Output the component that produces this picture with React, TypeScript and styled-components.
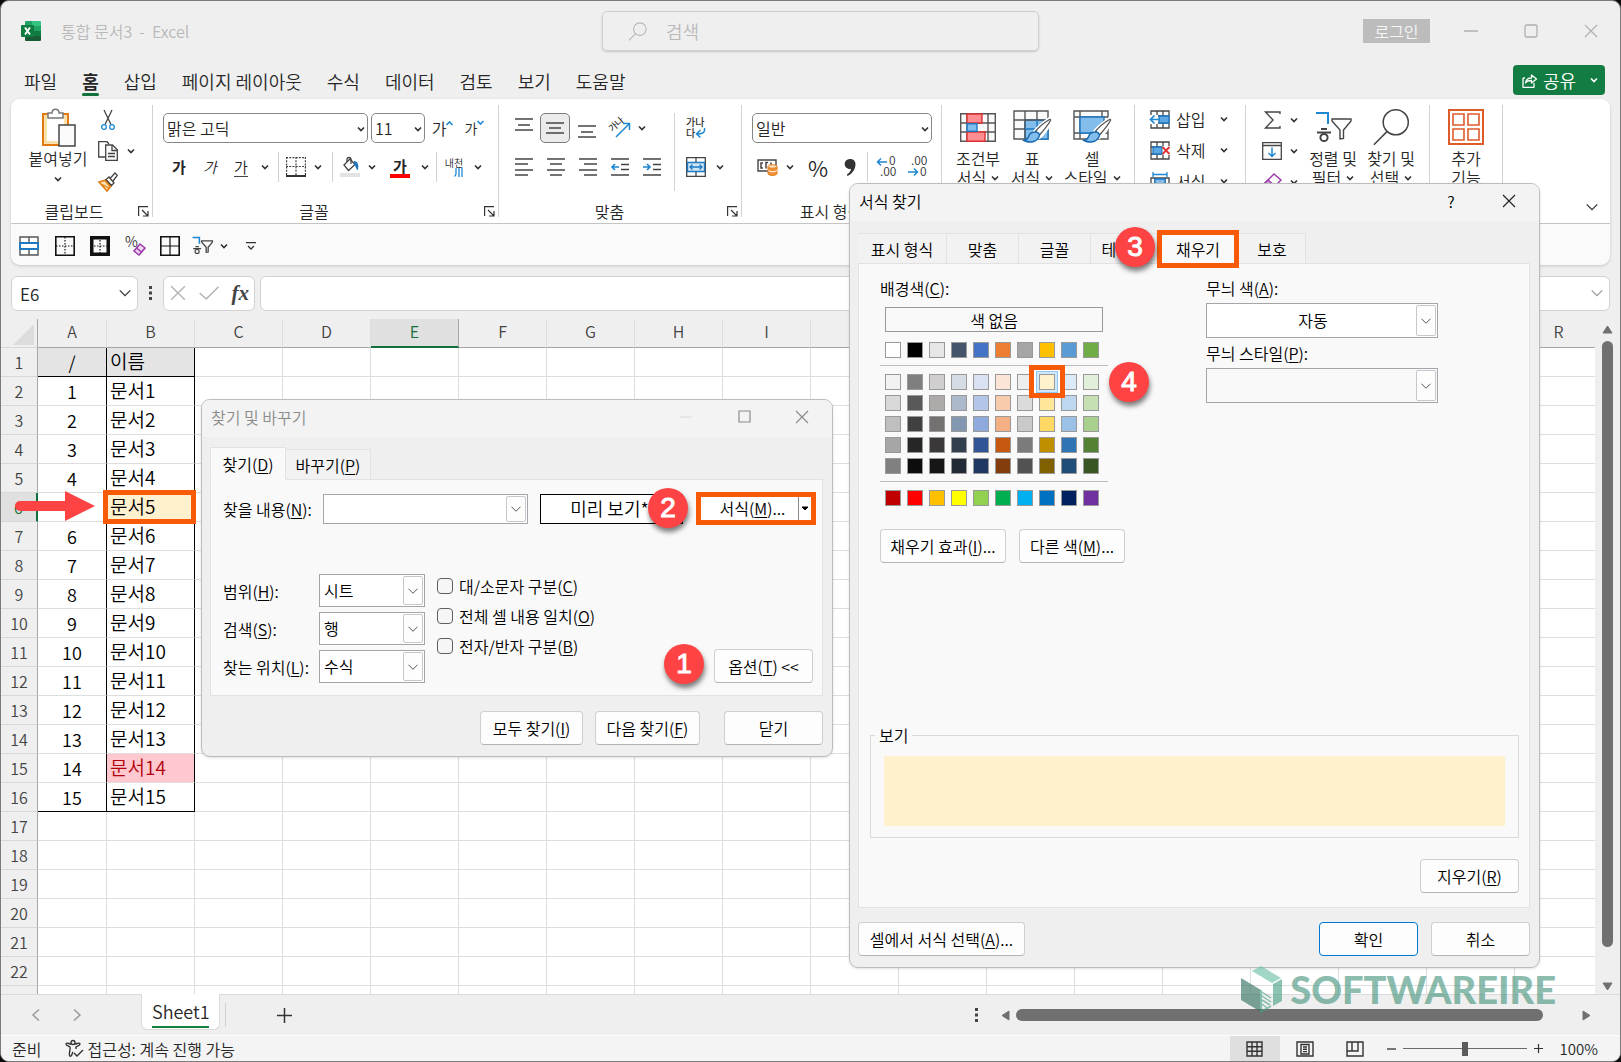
import React from "react";
import styled, { createGlobalStyle, css } from "styled-components";

const FONT = '"Noto Sans CJK KR", "Noto Sans", sans-serif';

const Global = createGlobalStyle`
  *, *::before, *::after { box-sizing: border-box; }
  html, body { margin: 0; padding: 0; background: #0c0c0c; }
  body { font-family: ${FONT}; font-size: 16px; font-weight: 350; line-height: 20px; color: #262626; overflow: hidden; }
  button, input, select { font: inherit; color: inherit; margin: 0; }
  button { border: 0; padding: 0; background: none; }
  svg { display: block; flex: none; overflow: visible; }
`;

/* ---------- window frame ---------- */
const Window = styled.div`
  position: relative;
  display: flex;
  flex-direction: column;
  height: 100vh;
  border: 1px solid #7d7a7a;
  border-radius: 9px;
  background: #efefef;
  overflow: hidden;
`;

const TitleBar = styled.header`
  display: grid;
  grid-template-columns: 1fr 437px 1fr;
  align-items: center;
  height: 60px;
  flex: none;
  padding-left: 20px;
  color: #b9b9b9;
`;
const TitleLeft = styled.div`
  display: flex;
  align-items: center;
  gap: 20px;
  white-space: pre;
`;
const SearchBox = styled.label`
  display: flex;
  align-items: center;
  gap: 17px;
  height: 40px;
  padding: 0 25px;
  border: 1px solid #cfcfcf;
  border-radius: 5px;
  box-shadow: 0 1px 2px #c4c4c4;
  input {
    flex: 1;
    min-width: 0;
    border: 0;
    outline: 0;
    background: transparent;
    font-size: 18px;
    &::placeholder { color: #b9b9b9; opacity: 1; }
  }
`;
const TitleRight = styled.div`
  display: flex;
  align-items: center;
  justify-content: flex-end;
  padding-right: 22px;
`;
const LoginButton = styled.button`
  width: 67px;
  height: 24px;
  margin-right: 11px;
  background: #bcbcbc;
  color: #f6f6f6;
  line-height: 22px;
`;
const WindowButton = styled.button`
  display: flex;
  align-items: center;
  justify-content: center;
  width: 60px;
  height: 30px;
  &:last-child { width: 14px; margin-left: 23px; }
`;

/* ---------- ribbon tabs ---------- */
const TabsRow = styled.nav`
  display: flex;
  align-items: center;
  justify-content: space-between;
  height: 38px;
  flex: none;
  padding: 0 15px 0 23px;
`;
const TabList = styled.div`
  display: flex;
  gap: 25px;
  padding-top: 2px;
`;
const RibbonTab = styled.button<{ $active?: boolean }>`
  position: relative;
  font-size: 18px;
  line-height: 28px;
  font-weight: ${(p) => (p.$active ? 700 : "inherit")};
  ${(p) =>
    p.$active &&
    css`
      &::after {
        content: "";
        position: absolute;
        left: 0;
        right: 0;
        bottom: -1px;
        height: 3px;
        border-radius: 2px;
        background: #12703c;
      }
    `}
`;
const ShareButton = styled.button`
  display: flex;
  align-items: center;
  gap: 6px;
  width: 92px;
  height: 30px;
  padding: 0 7px 0 9px;
  border-radius: 4px;
  background: #127c42;
  color: #fff;
  font-size: 18px;
  svg:last-child { margin-left: auto; }
`;

/* ---------- ribbon ---------- */
const Ribbon = styled.section`
  flex: none;
  margin: 0 10px;
  border-radius: 9px;
  background: #fafafa;
  box-shadow: 0 1px 3px #c6c6c6;
  overflow: hidden;
`;
const RibbonMain = styled.div`
  display: flex;
  height: 125px;
  padding-top: 6px;
  background: #fff;
  border-bottom: 1px solid #c4c4c4;
`;
const Group = styled.div<{ $w: number }>`
  position: relative;
  display: flex;
  flex-direction: column;
  flex: none;
  width: ${(p) => p.$w}px;
  height: 118px;
  &::after {
    content: "";
    position: absolute;
    top: 0;
    right: 0;
    bottom: 6px;
    width: 1px;
    background: #d2d2d2;
  }
`;
const GroupBody = styled.div<{ $pad?: string }>`
  display: flex;
  flex: 1;
  align-items: flex-start;
  padding: ${(p) => p.$pad ?? "0"};
`;
const GroupFooter = styled.div`
  display: flex;
  align-items: center;
  justify-content: center;
  height: 22px;
  padding-bottom: 2px;
  button {
    position: absolute;
    right: 4px;
    bottom: 6px;
  }
`;
const Stack = styled.div<{ $gap?: number }>`
  display: flex;
  flex-direction: column;
  gap: ${(p) => p.$gap ?? 0}px;
`;
const Row = styled.div<{ $gap?: number }>`
  display: flex;
  align-items: center;
  gap: ${(p) => p.$gap ?? 0}px;
`;
const Tool = styled.button<{ $w?: number; $on?: boolean }>`
  display: flex;
  align-items: center;
  justify-content: center;
  flex: none;
  width: ${(p) => p.$w ?? 32}px;
  height: 30px;
  border-radius: 5px;
  ${(p) =>
    p.$on &&
    css`
      background: #ebebeb;
      border: 1px solid #7c7c7c;
    `}
`;
const Glyph = styled.span<{ $bold?: boolean; $italic?: boolean; $under?: boolean; $size?: number }>`
  font-size: ${(p) => p.$size ?? 15}px;
  line-height: 18px;
  font-weight: ${(p) => (p.$bold ? 700 : "inherit")};
  font-style: ${(p) => (p.$italic ? "italic" : "normal")};
  border-bottom: ${(p) => (p.$under ? "1px solid #444" : "1px solid transparent")};
`;
const ToolDivider = styled.span<{ $h?: number; $w?: number }>`
  flex: none;
  width: ${(p) => p.$w ?? 10}px;
  height: ${(p) => p.$h ?? 30}px;
  background: linear-gradient(#d2d2d2, #d2d2d2) center / 1px 100% no-repeat;
`;
const RibbonSelect = styled.span<{ $w: number }>`
  position: relative;
  display: flex;
  width: ${(p) => p.$w}px;
  select {
    width: 100%;
    height: 30px;
    padding: 0 20px 0 3px;
    appearance: none;
    border: 1px solid #868686;
    border-radius: 5px;
    background: #fff;
  }
  svg {
    position: absolute;
    right: 3px;
    top: 12px;
    pointer-events: none;
  }
`;
const BigTool = styled.button<{ $w: number }>`
  display: flex;
  flex-direction: column;
  align-items: center;
  flex: none;
  width: ${(p) => p.$w}px;
  line-height: 19px;
  white-space: nowrap;
  > svg { margin-top: 7px; }
`;
const BigIcon = styled.span`
  display: flex;
  align-items: center;
  justify-content: center;
  height: 44px;
`;
const Inline = styled.span`
  display: inline-flex;
  align-items: center;
  gap: 5px;
`;
const CellTool = styled.button`
  display: flex;
  align-items: center;
  gap: 6px;
  height: 28px;
  svg:last-child { margin-left: 9px; }
`;
const CollapseCorner = styled.div`
  display: flex;
  flex: 1;
  align-items: flex-end;
  justify-content: flex-end;
  padding: 0 11px 9px 0;
`;
const QuickBar = styled.div`
  display: flex;
  align-items: center;
  height: 41px;
  padding-top: 2px;
`;

/* ---------- formula bar ---------- */
const FormulaRow = styled.div`
  display: flex;
  align-items: center;
  flex: none;
  height: 54px;
  padding: 2px 10px 0;
`;
const Field = styled.div<{ $w?: number }>`
  display: flex;
  align-items: center;
  justify-content: space-between;
  flex: ${(p) => (p.$w ? "none" : "1")};
  width: ${(p) => (p.$w ? `${p.$w}px` : "auto")};
  min-width: 0;
  height: 35px;
  padding: 0 5px 0 6px;
  border: 1px solid #d2d2d2;
  border-radius: 6px;
  background: #fff;
  input {
    flex: 1;
    min-width: 0;
    padding-top: 3px;
    border: 0;
    outline: 0;
    background: transparent;
    font-size: 17px;
  }
`;
const DotsCell = styled.span`
  display: flex;
  justify-content: center;
  width: 25px;
`;
const FxGlyph = styled.span`
  font-family: "Liberation Serif", serif;
  font-style: italic;
  font-weight: 700;
  font-size: 21px;
  line-height: 24px;
  color: #444;
`;
const Spacer = styled.span<{ $w: number }>`
  flex: none;
  width: ${(p) => p.$w}px;
`;

/* ---------- sheet ---------- */
const SheetArea = styled.main`
  display: flex;
  flex: 1;
  min-height: 0;
`;
const GridClip = styled.div`
  flex: 1;
  min-width: 0;
  overflow: hidden;
  background: #fff;
`;
const Grid = styled.table`
  table-layout: fixed;
  width: 1602px;
  border-collapse: separate;
  border-spacing: 0;
  col.head { width: 37px; }
  col.first { width: 69px; }
`;
const ColHead = styled.th<{ $on?: boolean }>`
  height: 29px;
  padding: 0 0 4px;
  font-weight: inherit;
  color: ${(p) => (p.$on ? "#12703c" : "#444")};
  background: ${(p) => (p.$on ? "#e0e0e0" : "#efefef")};
  border-right: 1px solid ${(p) => (p.$on ? "#a8a8a8" : "#dedede")};
  border-bottom: ${(p) => (p.$on ? "2px solid #12703c" : "1px solid #a6a6a6")};
`;
const CornerHead = styled.th`
  padding: 0;
  background: #efefef;
  border-right: 1px solid #a6a6a6;
  border-bottom: 1px solid #d8d8d8;
  svg { margin: 3px 3px 0 auto; }
`;
const RowHead = styled.th<{ $on?: boolean }>`
  height: 29px;
  padding: 0;
  font-weight: inherit;
  line-height: 20px;
  color: ${(p) => (p.$on ? "#12703c" : "#444")};
  background: ${(p) => (p.$on ? "#e0e0e0" : "#efefef")};
  border-right: ${(p) => (p.$on ? "2px solid #12703c" : "1px solid #a6a6a6")};
  border-bottom: 1px solid #d8d8d8;
`;
const Cell = styled.td<{ $kind?: "num" | "name"; $head?: boolean; $last?: boolean; $fill?: string; $ink?: string }>`
  position: relative;
  height: 29px;
  padding: 0 0 2px 3px;
  line-height: 24px;
  white-space: nowrap;
  color: ${(p) => p.$ink ?? "#000"};
  background: ${(p) => p.$fill ?? "transparent"};
  border-right: 1px solid ${(p) => (p.$kind ? "#000" : "#dedede")};
  border-bottom: 1px solid ${(p) => (p.$head || p.$last ? "#000" : "#dedede")};
  font-size: ${(p) => (p.$kind === "num" ? 18 : 19)}px;
  ${(p) => p.$kind === "num" && "text-align: center; padding: 0;"}
`;
const CellFrame = styled.span`
  position: absolute;
  z-index: 1;
  inset: -3px -2px -3px -4px;
  border: 5px solid #f95a08;
`;
const ArrowMark = styled.svg`
  position: absolute;
  z-index: 1;
  right: calc(100% + 12px);
  top: -5px;
`;
const VScroll = styled.div`
  display: flex;
  flex-direction: column;
  align-items: center;
  justify-content: space-between;
  flex: none;
  width: 25px;
  padding: 6px 0 3px;
  background: #efefef;
`;
const VThumb = styled.span`
  width: 11px;
  flex: 1;
  margin: 7px 0 35px;
  border-radius: 6px;
  background: #707070;
`;

/* ---------- bottom bars ---------- */
const SheetTabs = styled.footer`
  display: flex;
  align-items: center;
  flex: none;
  height: 41px;
  border-top: 1px solid #dadada;
`;
const SheetTab = styled.button`
  align-self: flex-start;
  width: 79px;
  height: 36px;
  margin-top: -1px;
  padding: 0 10px;
  border: 1px solid #dadada;
  border-top-color: #fff;
  border-radius: 0 0 6px 6px;
  background: #fff;
  font-size: 18px;
  line-height: 29px;
  span { display: block; border-bottom: 2px solid #12803f; }
`;
const HScroll = styled.div`
  display: flex;
  align-items: center;
  width: 590px;
  gap: 6px;
  margin: 0 29px 0 15px;
`;
const HThumb = styled.span`
  flex: 1;
  height: 12px;
  margin-right: 33px;
  border-radius: 6px;
  background: #707070;
`;
const StatusBar = styled.footer`
  display: flex;
  align-items: center;
  flex: none;
  height: 26px;
  padding: 0 22px 0 11px;
  border-top: 1px solid #fff;
  background: #f4f4f4;
  line-height: 24px;
`;
const ZoomText = styled.span`
  font-size: 15px;
`;
const ViewButton = styled.button<{ $on?: boolean }>`
  display: flex;
  align-items: center;
  justify-content: center;
  width: 50px;
  height: 26px;
  background: ${(p) => (p.$on ? "#dfdfdf" : "transparent")};
`;
const Grow = styled.span`
  flex: 1;
`;
const ZoomSlider = styled.input`
  appearance: none;
  width: 124px;
  height: 14px;
  margin: 0 7px;
  background: linear-gradient(#6a6a6a, #6a6a6a) center / 100% 1px no-repeat;
  &::-webkit-slider-thumb {
    appearance: none;
    width: 6px;
    height: 14px;
    background: #5c5c5c;
  }
`;

/* ---------- dialogs ---------- */
const Dialog = styled.section<{ $x: number; $y: number; $w: number; $h: number }>`
  position: absolute;
  left: ${(p) => p.$x}px;
  top: ${(p) => p.$y}px;
  display: flex;
  flex-direction: column;
  width: ${(p) => p.$w}px;
  height: ${(p) => p.$h}px;
  padding: 0 9px 11px 8px;
  border: 1px solid #bdbdbd;
  border-radius: 9px;
  background: #efefef;
  box-shadow: 0 1px 3px rgba(0, 0, 0, 0.12);
  color: #000;
`;
const DialogTitle = styled.header<{ $muted?: boolean }>`
  display: flex;
  align-items: center;
  flex: none;
  height: 37px;
  margin: 0 -9px 0 -8px;
  padding: 0 22px 4px 9px;
  border-radius: 8px 8px 0 0;
  background: #f3f3f3;
  color: ${(p) => (p.$muted ? "#8c8c8c" : "#000")};
  h2 { flex: 1; margin: 0; font-size: 16px; font-weight: inherit; }
`;
const TitleButton = styled.button`
  display: flex;
  align-items: center;
  justify-content: center;
  width: 58px;
  height: 28px;
  &:last-child { width: 16px; margin-left: 21px; }
`;
const DialogTabs = styled.div<{ $top: number }>`
  display: flex;
  align-items: flex-end;
  flex: none;
  height: 32px;
  margin-top: ${(p) => p.$top}px;
  margin-bottom: -1px;
`;
const DialogTab = styled.button<{ $w: number; $active?: boolean; $mark?: boolean }>`
  position: relative;
  flex: none;
  width: ${(p) => p.$w}px;
  height: ${(p) => (p.$active ? 33 : 31)}px;
  line-height: 28px;
  background: ${(p) => (p.$active ? "#f9f9f9" : "#f2f2f2")};
  border: 1px solid #e2e2e2;
  border-left-width: ${(p) => (p.$active ? 1 : 0)}px;
  border-bottom-color: ${(p) => (p.$active ? "#f9f9f9" : "#e2e2e2")};
  ${(p) =>
    p.$mark &&
    css`
      z-index: 1;
      height: 38px;
      margin-bottom: -4px;
      border: 5px solid #f95a08;
    `}
`;
const Panel = styled.div<{ $pad: string }>`
  display: flex;
  flex-direction: column;
  flex: 1;
  padding: ${(p) => p.$pad};
  border: 1px solid #e2e2e2;
  background: #f9f9f9;
`;
const DialogButton = styled.button<{ $w: number; $primary?: boolean }>`
  flex: none;
  width: ${(p) => p.$w}px;
  height: 34px;
  border: 1px solid ${(p) => (p.$primary ? "#0078d4" : "#cfcfcf")};
  border-bottom-color: ${(p) => (p.$primary ? "#0078d4" : "#b4b4b4")};
  border-radius: 4px;
  background: #fdfdfd;
  line-height: 30px;
  white-space: nowrap;
`;
const ButtonRow = styled.div<{ $top: number; $align?: string; $gap?: number }>`
  display: flex;
  justify-content: ${(p) => p.$align ?? "flex-end"};
  gap: ${(p) => p.$gap ?? 13}px;
  margin-top: ${(p) => p.$top}px;
`;
const Key = styled.u`
  text-underline-offset: 2px;
`;
const FieldLabel = styled.label<{ $w?: number }>`
  flex: none;
  width: ${(p) => (p.$w ? `${p.$w}px` : "auto")};
  white-space: nowrap;
`;
const Combo = styled.span<{ $w: number; $h: number; $center?: boolean; $flat?: boolean }>`
  position: relative;
  display: flex;
  flex: none;
  width: ${(p) => p.$w}px;
  height: ${(p) => p.$h}px;
  border: 1px solid #a3a5ab;
  background: ${(p) => (p.$flat ? "#f9f9f9" : "#fff")};
  select, input {
    width: 100%;
    height: 100%;
    padding: 0 22px 2px 4px;
    appearance: none;
    border: 0;
    outline: 0;
    background: transparent;
    text-align-last: ${(p) => (p.$center ? "center" : "left")};
  }
`;
const ComboArrow = styled.span`
  position: absolute;
  top: 1px;
  right: 1px;
  bottom: 1px;
  display: flex;
  align-items: center;
  justify-content: center;
  width: 20px;
  border: 1px solid #c8c8cc;
  border-radius: 2px;
  background: #fdfdfd;
  pointer-events: none;
`;
const PreviewBox = styled.output`
  flex: none;
  width: 143px;
  height: 30px;
  margin-left: 12px;
  padding-right: 4px;
  border: 1px solid #000;
  background: #fff;
  font-size: 18px;
  line-height: 27px;
  text-align: center;
`;
const SplitButton = styled.button`
  display: flex;
  align-items: stretch;
  width: 120px;
  height: 33px;
  margin-left: 13px;
  border: 5px solid #f95a08;
  background: #fff;
  line-height: 22px;
  span:first-child { flex: 1; padding-left: 6px; }
  span:last-child {
    display: flex;
    align-items: center;
    justify-content: center;
    width: 13px;
    border-left: 1px solid #8a8a8a;
  }
`;
const OptionsArea = styled.div`
  display: flex;
  align-items: flex-end;
  margin-top: 49px;
  > button { margin: 0 4px 0 auto; }
`;
const ChecksColumn = styled.div`
  align-self: flex-start;
  margin: -3px 0 0 12px;
`;
const CheckLine = styled.label`
  display: flex;
  align-items: center;
  gap: 6px;
  height: 30px;
  white-space: nowrap;
  input {
    appearance: none;
    width: 16px;
    height: 16px;
    border: 1px solid #5f5f5f;
    border-radius: 4px;
    background: #f6f6f6;
  }
`;
const Badge = styled.span<{ $x: number; $y: number }>`
  position: absolute;
  z-index: 2;
  left: ${(p) => p.$x}px;
  top: ${(p) => p.$y}px;
  width: 40px;
  height: 40px;
  border-radius: 50%;
  background: #fd4343;
  box-shadow: 1px 4px 5px rgba(0, 0, 0, 0.5);
  color: #fff;
  font-family: "Liberation Sans", Arial, sans-serif;
  font-size: 28px;
  line-height: 40px;
  text-align: center;
  -webkit-text-stroke: 1px #fff;
`;
const FillColumns = styled.div`
  display: flex;
  gap: 98px;
`;
const Column = styled.div<{ $w: number }>`
  display: flex;
  flex-direction: column;
  flex: none;
  width: ${(p) => p.$w}px;
`;
const NoColor = styled.button`
  height: 25px;
  margin: 9px 5px 2px;
  border: 1px solid #999;
  line-height: 20px;
`;
const Swatches = styled.div<{ $line?: boolean }>`
  display: grid;
  grid-template-columns: repeat(10, 16px);
  gap: 5px 6px;
  padding: 8px 5px 7px;
  border-bottom: ${(p) => (p.$line ? "1px solid #bdbdbd" : "0")};
`;
const Swatch = styled.button<{ $c: string; $picked?: boolean }>`
  position: relative;
  width: 16px;
  height: 16px;
  border: 1px solid #999;
  background: ${(p) => p.$c};
  ${(p) =>
    p.$picked &&
    css`
      z-index: 1;
      box-shadow: 0 0 0 2px #cfe8fb, 0 0 0 3px #90c8f0, 0 0 0 5px #fff;
      &::after {
        content: "";
        position: absolute;
        inset: -10px -11px -9px;
        border: 5px solid #f95a08;
      }
    `}
`;
const PatternGap = styled.div`
  margin: 5px 0;
`;
const PreviewArea = styled.div`
  margin: auto 0 0 -10px;
`;
const PreviewSet = styled.fieldset`
  height: 113px;
  margin: 0;
  padding: 11px 13px 9px;
  border: 1px solid #dadada;
  min-width: 0;
  legend { margin-left: -9px; padding: 0 4px; }
`;
const PreviewFill = styled.div`
  height: 70px;
  background: #fff0ce;
`;

/* ---------- watermark ---------- */
const Watermark = styled.div`
  position: absolute;
  right: 64px;
  bottom: 48px;
  display: flex;
  align-items: center;
  gap: 8px;
  opacity: 0.62;
  color: #46947d;
  font-family: Lato, "Open Sans", sans-serif;
  font-weight: 900;
  font-size: 38px;
  line-height: 48px;
`;

/* ---------- icons ---------- */
const Chev = ({ s = 8, c = "#333", w = 2 }: { s?: number; c?: string; w?: number }) => (
  <svg width={s} height={s} viewBox="0 0 8 8" fill="none" stroke={c} strokeWidth={(w * 8) / s / 1.2}>
    <path d="M1 2.5 4 5.5 7 2.5" />
  </svg>
);
const Cross = ({ s = 14, c = "#222" }: { s?: number; c?: string }) => (
  <svg width={s} height={s} viewBox="0 0 14 14" stroke={c} strokeWidth="1.2">
    <path d="M1 1 13 13M13 1 1 13" />
  </svg>
);
const ExcelLogo = () => (
  <svg width="20" height="20" viewBox="0 0 20 20">
    <rect x="4" width="8" height="10" rx="1" fill="#21a366" />
    <rect x="11" width="9" height="6" rx="1" fill="#33c481" />
    <rect x="4" y="5" width="8" height="5" fill="#107c41" />
    <rect x="12" y="5" width="8" height="5" fill="#21a366" />
    <rect x="12" y="10" width="8" height="5" fill="#107c41" />
    <path d="M4 10h8v5h8v4a1 1 0 0 1-1 1H5a1 1 0 0 1-1-1z" fill="#185c37" />
    <rect y="4" width="13" height="12" rx="1" fill="#107c41" />
    <path d="M4 6.5 9 13.500M9 6.500 4 13.500" stroke="#fff" strokeWidth="1.900" />
  </svg>
);
const Lens = ({ s = 19, c = "#b9b9b9", w = 1.2 }: { s?: number; c?: string; w?: number }) => (
  <svg width={s} height={s} viewBox="0 0 20 20" fill="none" stroke={c} strokeWidth={w}>
    <circle cx="12.500" cy="7.500" r="6.600" />
    <path d="M8 12.300 1 19.300" />
  </svg>
);
const Launcher = () => (
  <svg width="11" height="11" viewBox="0 0 11 11" fill="none" stroke="#333" strokeWidth="1.200">
    <path d="M.6 10V.6H10M4 4l5.500 5.500M10 5v5H5" />
  </svg>
);
const PasteIcon = () => (
  <svg width="35" height="39" viewBox="0 0 35 39" fill="none">
    <path d="M2 6h25v31H2z" fill="#fff" stroke="#e07a10" strokeWidth="2" />
    <path d="M4.500 8.500h20v26h-20z" stroke="#f9dc9c" strokeWidth="2.500" />
    <path d="M7 10V5h4c0-5 7-5 7 0h4v5z" fill="#fff" stroke="#777" strokeWidth="1.500" />
    <path d="M18 17h16v21H18z" fill="#fbfbfb" stroke="#444" strokeWidth="1.500" />
  </svg>
);
const CutIcon = () => (
  <svg width="14" height="20" viewBox="0 0 14 20" fill="none" strokeWidth="1.300">
    <path d="M3 0 10 14.500M11 0 4 14.500" stroke="#444" />
    <circle cx="3" cy="17" r="2.300" stroke="#1e88d2" />
    <circle cx="11" cy="17" r="2.300" stroke="#1e88d2" />
  </svg>
);
const CopyIcon = () => (
  <svg width="20" height="20" viewBox="0 0 20 20" fill="none" stroke="#444" strokeWidth="1.300">
    <path d="M7 16H.7V.7H9L11 3" />
    <path d="M7.700 4h6.800l4.800 4.800v10.500H7.700z" fill="#fafafa" />
    <path d="M14 4.500v5h5M10 12.500h7M10 15.500h7" />
  </svg>
);
const BrushIcon = () => (
  <svg width="20" height="20" viewBox="0 0 20 20" fill="none" strokeWidth="1.300">
    <path d="M1 10 8 8l5 6-4 5z" fill="#fbe2b0" stroke="#e07a10" strokeWidth="1.600" />
    <path d="M4 12.500 11 16M7 8.500 12 14.500" stroke="#e07a10" />
    <path d="M8 7.500 11 5l5 6-2.500 2.500zM12.500 6 17 1l2.300 2.300L15 9" fill="#fff" stroke="#444" />
  </svg>
);
const BordersIcon = () => (
  <svg width="20" height="20" viewBox="0 0 20 20" fill="none" stroke="#444" strokeWidth="1.200">
    <path d="M.6 0v18M19.400 0v18M10 0v18M0 .6h20M0 9.500h20" strokeDasharray="2 1.200" />
    <path d="M0 19h20" strokeWidth="2" stroke="#333" />
  </svg>
);
const BucketIcon = () => (
  <svg width="20" height="20" viewBox="0 0 20 20" fill="none" strokeWidth="1.300">
    <path d="M4 8 10 2l5 5.500-6.500 6z" stroke="#444" fill="#fff" />
    <path d="M7 5V2.500a2 2 0 0 1 4 0V7" stroke="#444" />
    <path d="M14 4c4 0 5 4 4 9-2 0-2-4-4-5.500z" fill="#1e78c2" />
    <path d="M0 16h20v4H0z" fill="#e3e3e3" />
  </svg>
);
const FontColorIcon = styled.span`
  width: 20px;
  border-bottom: 4px solid #f00;
  font-weight: 700;
  font-size: 15px;
  line-height: 17px;
  text-align: center;
`;
const RubyIcon = styled.span`
  display: flex;
  flex-direction: column;
  align-items: center;
  font-size: 10px;
  line-height: 11px;
  svg { align-self: flex-end; }
`;
const Lines = ({ rows, h = 18 }: { rows: [number, number, number][]; h?: number }) => (
  <svg width="18" height={h} viewBox={`0 0 18 ${h}`} stroke="#444" strokeWidth="1.300">
    {rows.map(([x, w, y]) => (
      <path key={y} d={`M${x} ${y}h${w}`} />
    ))}
  </svg>
);
const IndentIcon = ({ out }: { out?: boolean }) => (
  <svg width="18" height="18" viewBox="0 0 18 18" fill="none" stroke="#444" strokeWidth="1.300">
    <path d="M0 1h18M10 6.500h8M10 11.500h8M0 17h18" />
    <path d={out ? "M8 9H1M4 6 1 9l3 3" : "M0 9h7M4 6l3 3-3 3"} stroke="#1e88d2" strokeWidth="1.600" />
  </svg>
);
const OrientIcon = () => (
  <svg width="22" height="22" viewBox="0 0 22 22" fill="none">
    <text x="0" y="11" fontSize="9" fontWeight="500" fill="#333" fontFamily={FONT} transform="rotate(-42 7 9)">가나</text>
    <path d="M7 20 20 7M14 6.500h6.500V13" stroke="#1e88d2" strokeWidth="1.500" />
  </svg>
);
const WrapIcon = () => (
  <svg width="20" height="20" viewBox="0 0 20 20" fill="none">
    <text x="0" y="8" fontSize="10" fontWeight="500" fill="#333" fontFamily={FONT}>가나</text>
    <text x="0" y="19" fontSize="10" fontWeight="500" fill="#333" fontFamily={FONT}>다</text>
    <path d="M18.500 10c1 5-3 6-7 6M14.500 12l-4 4 4 3.500" stroke="#1e88d2" strokeWidth="1.500" />
  </svg>
);
const MergeIcon = () => (
  <svg width="20" height="20" viewBox="0 0 20 20" fill="none" stroke="#444" strokeWidth="1.300">
    <path d="M.7 .7h18.600v18.600H.7zM10 0v5M10 15v5" fill="#fff" />
    <path d="M1.500 5.500h17v9h-17z" fill="#cfe6f8" stroke="#1e78c2" />
    <path d="M4 10h12M6.500 7.500 4 10l2.500 2.500M13.500 7.500 16 10l-2.500 2.500" stroke="#1e78c2" />
  </svg>
);
const MoneyIcon = () => (
  <svg width="21" height="18" viewBox="0 0 21 18" fill="none">
    <path d="M1 2h18v11H1z" stroke="#444" strokeWidth="1.400" />
    <path d="M6 5H4v5h2M11 4.500H9v6M14 4.500v2" stroke="#444" strokeWidth="1.500" />
    <path d="M11 8.500v7c0 2.500 9 2.500 9 0v-7z" fill="#f0913a" stroke="#e07a10" />
    <ellipse cx="15.500" cy="8.500" rx="4.500" ry="1.800" fill="#fbe2c0" stroke="#e07a10" />
    <path d="M11 12c0 2.300 9 2.300 9 0" stroke="#fff" />
  </svg>
);
const DecimalIcon = ({ more }: { more?: boolean }) => (
  <svg width="22" height="22" viewBox="0 0 22 22" fill="none">
    <text x={more ? 13 : 4} y="9" fontSize="12" fill="#333" fontFamily={FONT}>{more ? "0" : ".00"}</text>
    <text x={more ? 4 : 13} y="20" fontSize="12" fill="#333" fontFamily={FONT}>{more ? ".00" : "0"}</text>
    <path
      d={more ? "M11 6H1.500M5 2.500 1.500 6 5 9.500" : "M1 16h9.500M7 12.500l3.500 3.500L7 19.500"}
      stroke="#1e88d2"
      strokeWidth="1.500"
    />
  </svg>
);
const CondIcon = () => (
  <svg width="36" height="29" viewBox="0 0 36 29" fill="none" stroke="#555" strokeWidth="1.400">
    <path d="M.7.700h34.600v27.600H.7zM7 0v29M28 0v29M0 10h36M0 19h36" fill="#fafafa" />
    <path d="M7 1h15v9H7zM7 19h18v9.300H7z" fill="#ff8d92" stroke="#dc3030" />
    <path d="M7 10.700h10v7.600H7z" fill="#83bdec" stroke="#1e78c2" />
  </svg>
);
const BrushOverlay = () => (
  <>
    <path d="M36.500 9C24 18 22 21 21 23l5 4c3-2 8-8 12-16.500 0-1-.5-1.800-1.500-1.500z" fill="#fff" stroke="#fff" strokeWidth="4" />
    <path d="M36.500 9.500C29 14 25 18 22.500 21.500l4 3.500C31 20 35 15 37.500 10.500c.3-.8-.3-1.300-1-1z" fill="#fff" stroke="#555" strokeWidth="1.300" />
    <path d="M22 22c3-.5 5.500 2 4 5-2.500 5-9 6.500-15 3.500 4-1 4-2.500 5-5 1-2.300 3.500-3.500 6-3.500z" fill="#83bdec" stroke="#1567b0" strokeWidth="1.400" />
  </>
);
const TableStyleIcon = () => (
  <svg width="38" height="35" viewBox="0 0 38 35" fill="none" stroke="#555" strokeWidth="1.400">
    <path d="M1 1h34v28H1z" fill="#fafafa" />
    <path d="M12 10h23v19H12z" fill="#83bdec" stroke="#1e78c2" />
    <path d="M12 1v28M24 1v9M1 10h34M1 19h11" />
    <path d="M24 10v19M12 19h23" stroke="#1e78c2" />
    <BrushOverlay />
  </svg>
);
const CellStyleIcon = () => (
  <svg width="38" height="35" viewBox="0 0 38 35" fill="none" stroke="#555" strokeWidth="1.400">
    <path d="M1 1h34v28H1zM7 1v28M1 7h34M1 23h34M29 1v6" fill="#fafafa" />
    <path d="M7 7h24v16H7z" fill="#83bdec" stroke="#1e78c2" />
    <BrushOverlay />
  </svg>
);
const CellOpIcon = ({ kind }: { kind: "insert" | "delete" | "format" }) => (
  <svg width="20" height="19" viewBox="0 0 20 19" fill="none" stroke="#444" strokeWidth="1.300">
    {kind === "format" ? (
      <>
        <path d="M1 6h18v12H1zM5 6v12M15 6v12M1 12h18" fill="#fff" />
        <path d="M5 7h10v8H5z" fill="#83bdec" stroke="#1e78c2" />
        <path d="M3 2.500h14M3 0v5M17 0v5" stroke="#1e88d2" />
      </>
    ) : (
      <>
        <path d="M1 1h18v17H1zM7 1v17M13 1v17M1 6h18M1 13h18" fill="#fff" />
        <path d={kind === "insert" ? "M9 6h10v7H9z" : "M3 6h9v7H3z"} fill="#5da7e3" stroke="#1e78c2" />
        {kind === "insert" ? (
          <>
            <path d="M0 5h8v9H0z" fill="#fff" stroke="none" />
            <path d="M10 9.500H1M4.500 5.500l-4 4 4 4" stroke="#1e88d2" strokeWidth="1.700" />
          </>
        ) : (
          <>
            <path d="M12.500 5H20v9h-7.500z" fill="#fff" stroke="none" />
            <path d="m12.500 6 7 7M19.500 6l-7 7" stroke="#e03030" strokeWidth="1.800" />
          </>
        )}
      </>
    )}
  </svg>
);
const SigmaIcon = () => (
  <svg width="17" height="18" viewBox="0 0 17 18" fill="none" stroke="#444" strokeWidth="1.400">
    <path d="M16 3V1H1.500L9 9l-7.500 8H16v-2" />
  </svg>
);
const FillDownIcon = () => (
  <svg width="20" height="18" viewBox="0 0 20 18" fill="none" stroke="#444" strokeWidth="1.300">
    <path d="M.7.700h18.600v16.600H.7zM.7 3.500h18.600" />
    <path d="M10 5.500v9M6.500 11l3.500 3.500 3.500-3.500" stroke="#1e88d2" strokeWidth="1.500" />
  </svg>
);
const EraserIcon = () => (
  <svg width="20" height="20" viewBox="0 0 20 20" fill="none" stroke="#9b3fa8" strokeWidth="1.500">
    <path d="M12 2 19 8 9 18H6L1 13z" fill="#fff" />
    <path d="M1 13 6 8l7 6-4 4H6z" fill="#dba6e2" />
  </svg>
);
const SortFilterIcon = ({ s = 37 }: { s?: number }) => (
  <svg width={s} height={(s * 30) / 37} viewBox="0 0 37 30" fill="none" strokeWidth={s > 30 ? 1.4 : 2.3}>
    <path d="M1 1h12v11" stroke="#1e88d2" strokeWidth={s > 30 ? 2 : 2.8} />
    <path d="M2 20.500h14M6 17h6" stroke="#444" strokeWidth="2" />
    <circle cx="9" cy="25.500" r="3.600" stroke="#444" strokeWidth="2" />
    <path d="M17 7h19v2l-7.500 9v8.500L25 27v-9L17 9z" stroke="#444" />
  </svg>
);
const AddinsIcon = () => (
  <svg width="36" height="36" viewBox="0 0 36 36" fill="none" stroke="#de5b2a" strokeWidth="1.600">
    <path d="M1 1h34v34H1z" strokeWidth="2" />
    <path d="M5 5h11v11H5zM20 5h11v11H20zM5 20h11v11H5zM20 20h11v11H20z" />
  </svg>
);
const MergeRowsIcon = () => (
  <svg width="20" height="20" viewBox="0 0 20 20" fill="none" stroke="#555" strokeWidth="1.400">
    <path d="M1 1h18v18H1zM10 1v5M10 14v5" fill="#fff" />
    <path d="M1 7h18v6H1z" stroke="#1e78c2" strokeWidth="1.800" />
  </svg>
);
const OutlineIcon = ({ w = 1.6, solid }: { w?: number; solid?: boolean }) => (
  <svg width="20" height="20" viewBox="0 0 20 20" fill="none" stroke="#111">
    <path d="M10 1v18M1 10h18" strokeWidth="1.200" strokeDasharray={solid ? undefined : "1.500 1.500"} />
    <path d={`M${w / 2} ${w / 2}h${20 - w}v${20 - w}h${w - 20}z`} strokeWidth={w} />
  </svg>
);
const PercentEraserIcon = () => (
  <svg width="21" height="21" viewBox="0 0 21 21" fill="none">
    <text x="0" y="12" fontSize="14" fill="#333" fontFamily={FONT}>%</text>
    <path d="m15 9 5 4-6 7-5-4z" fill="#f0d4f4" stroke="#9b3fa8" strokeWidth="1.600" />
    <path d="m11.500 13 5 4" stroke="#9b3fa8" strokeWidth="1.600" />
  </svg>
);
const MoreIcon = () => (
  <svg width="10" height="8" viewBox="0 0 10 8" fill="none" stroke="#333" strokeWidth="1.300">
    <path d="M0 .7h10M2 4l3 3 3-3" />
  </svg>
);
const DotsIcon = () => (
  <svg width="3" height="14" viewBox="0 0 3 14" fill="#444">
    <path d="M0 0h3v3H0zM0 5.500h3v3H0zM0 11h3v3H0z" />
  </svg>
);
const Angle = ({ right }: { right?: boolean }) => (
  <svg width="8" height="12" viewBox="0 0 8 12" fill="none" stroke="#9a9a9a" strokeWidth="1.500">
    <path d={right ? "M1 .5 7 6 1 11.500" : "M7 .5 1 6l6 5.500"} />
  </svg>
);
const Triangle = ({ d, w, h, c = "#707070" }: { d: string; w: number; h: number; c?: string }) => (
  <svg width={w} height={h} viewBox={`0 0 ${w} ${h}`} fill={c} stroke={c} strokeLinejoin="round">
    <path d={d} />
  </svg>
);
const ShareIcon = () => (
  <svg width="15" height="15" viewBox="0 0 15 15" fill="none" stroke="#fff" strokeWidth="1.300">
    <path d="M1 5v9.300h11V10M1 5h2M3.500 10c.5-4 3-5 6-5V2l5 4-5 4V7.500c-3 0-5 .5-6 2.500z" strokeLinejoin="round" />
  </svg>
);
const AccessIcon = () => (
  <svg width="19" height="18" viewBox="0 0 19 18" fill="none" stroke="#333" strokeWidth="1.400">
    <circle cx="8" cy="2.500" r="2" />
    <path d="M6 4C4 4 1 2 1 4s3 2 4 3-2 8 0 9 2-3 3-4M10 4c2 0 5-2 5 0s-3 2-4 3v2M9 13l3 3 6-6" />
  </svg>
);
const NormalViewIcon = () => (
  <svg width="17" height="16" viewBox="0 0 17 16" fill="none" stroke="#333" strokeWidth="1.400">
    <path d="M1 1h15v14H1zM6 1v14M11 1v14M1 5.700h15M1 10.300h15" />
  </svg>
);
const PageViewIcon = () => (
  <svg width="18" height="16" viewBox="0 0 18 16" fill="none" stroke="#333" strokeWidth="1.400">
    <path d="M1 1h16v14H1zM5 3.500h8v9.500H5zM7 6h4M7 8.300h4M7 10.600h4" />
  </svg>
);
const BreakViewIcon = () => (
  <svg width="18" height="16" viewBox="0 0 18 16" fill="none" stroke="#333" strokeWidth="1.400">
    <path d="M1 1h16v14H1zM6 1v9h6V1M1 10h5" />
  </svg>
);
const CubeMark = () => (
  <svg width="41" height="46" viewBox="0 0 41 46">
    <path d="M20 0 40 12 31 17 11 5z" fill="#6ac0a8" />
    <path d="M0 12 20 24v22L0 34z" fill="#2f6f5f" />
    <path d="M41 13v22l-9 5V18z" fill="#46a086" />
    <path d="M20 24v22l10-6" fill="none" stroke="#46a086" strokeWidth="2" />
    <path d="m21 26 9 6M21 30l9 6M21 34l8 5M21 38l5 4" stroke="#46a086" strokeWidth="1.500" />
  </svg>
);

/* ---------- data ---------- */
const COLS = "ABCDEFGHIJKLMNOPQR".split("");
const ROWS = Array.from({ length: 23 }, (_, i) => i + 1);
const THEME = ["#ffffff", "#000000", "#e7e6e6", "#44546a", "#4472c4", "#ed7d31", "#a5a5a5", "#ffc000", "#5b9bd5", "#70ad47"];
const SHADES = [
  ["#f2f2f2", "#7f7f7f", "#d0cece", "#d6dce4", "#d9e1f2", "#fce4d6", "#ededed", "#fff2cc", "#ddebf7", "#e2efda"],
  ["#d9d9d9", "#595959", "#aeaaaa", "#acb9ca", "#b4c6e7", "#f8cbad", "#dbdbdb", "#ffe699", "#bdd7ee", "#c6e0b4"],
  ["#bfbfbf", "#404040", "#757171", "#8497b0", "#8ea9db", "#f4b084", "#c9c9c9", "#ffd966", "#9bc2e6", "#a9d08e"],
  ["#a6a6a6", "#262626", "#3a3838", "#333f4f", "#305496", "#c65911", "#7b7b7b", "#bf8f00", "#2f75b5", "#548235"],
  ["#808080", "#0d0d0d", "#161616", "#222b35", "#203764", "#833c0c", "#525252", "#806000", "#1f4e78", "#375623"],
];
const STANDARD = ["#c00000", "#ff0000", "#ffc000", "#ffff00", "#92d050", "#00b050", "#00b0f0", "#0070c0", "#002060", "#7030a0"];

const DialogCombo = ({ id, w, h, value, center, flat }: { id: string; w: number; h: number; value: string; center?: boolean; flat?: boolean }) => (
  <Combo $w={w} $h={h} $center={center} $flat={flat}>
    <select id={id} defaultValue={value}>
      <option>{value}</option>
    </select>
    <ComboArrow>
      <Chev s={12} c="#555" w={1.2} />
    </ComboArrow>
  </Combo>
);

const DropTool = ({ w = 18 }: { w?: number }) => (
  <Tool $w={w} aria-label="옵션">
    <Chev />
  </Tool>
);

const RibbonBar = () => (
  <Ribbon>
    <RibbonMain>
      <Group $w={142}>
        <GroupBody $pad="0 0 0 14px">
          <BigTool $w={66}>
            <BigIcon>
              <PasteIcon />
            </BigIcon>
            붙여넣기
            <Chev />
          </BigTool>
          <Stack $gap={1}>
            <Tool $w={34}><CutIcon /></Tool>
            <Row>
              <Tool $w={34}><CopyIcon /></Tool>
              <DropTool w={12} />
            </Row>
            <Tool $w={34}><BrushIcon /></Tool>
          </Stack>
        </GroupBody>
        <GroupFooter>
          클립보드<Spacer $w={16} />
          <button aria-label="클립보드 설정"><Launcher /></button>
        </GroupFooter>
      </Group>

      <Group $w={346}>
        <GroupBody $pad="8px 0 0 10px">
          <Stack $gap={9}>
            <Row $gap={3}>
              <RibbonSelect $w={205}>
                <select aria-label="글꼴" defaultValue="맑은 고딕"><option>맑은 고딕</option></select>
                <Chev />
              </RibbonSelect>
              <RibbonSelect $w={54}>
                <select aria-label="글꼴 크기" defaultValue="11"><option>11</option></select>
                <Chev />
              </RibbonSelect>
              <Tool $w={29}>
                <Glyph $size={16}>가</Glyph>
                <svg width="7" height="16" viewBox="0 0 7 16" fill="none" stroke="#1e88d2" strokeWidth="1.600"><path d="m.5 5 3-3 3 3" /></svg>
              </Tool>
              <Tool $w={29}>
                <Glyph $size={14}>가</Glyph>
                <svg width="7" height="16" viewBox="0 0 7 16" fill="none" stroke="#1e88d2" strokeWidth="1.600"><path d="m.5 1 3 3 3-3" /></svg>
              </Tool>
            </Row>
            <Row>
              <Tool><Glyph $bold>가</Glyph></Tool>
              <Tool $w={30}><Glyph $italic>가</Glyph></Tool>
              <Tool><Glyph $under>가</Glyph></Tool>
              <DropTool w={16} />
              <ToolDivider />
              <Tool $w={26}><BordersIcon /></Tool>
              <DropTool />
              <ToolDivider />
              <Tool $w={26}><BucketIcon /></Tool>
              <DropTool />
              <Tool $w={38}><FontColorIcon>가</FontColorIcon></Tool>
              <DropTool w={12} />
              <ToolDivider />
              <Tool $w={26}>
                <RubyIcon>
                  내천
                  <svg width="9" height="9" viewBox="0 0 9 9" stroke="#1e88d2" strokeWidth="1.300" fill="none"><path d="M2 0v6L.5 8.500M5 0v9M8 0v9" /></svg>
                </RubyIcon>
              </Tool>
              <DropTool w={22} />
            </Row>
          </Stack>
        </GroupBody>
        <GroupFooter>
          글꼴<Spacer $w={24} />
          <button aria-label="글꼴 설정"><Launcher /></button>
        </GroupFooter>
      </Group>

      <Group $w={243}>
        <GroupBody $pad="8px 0 0 9px">
          <Stack $gap={9}>
            <Row>
              <Tool><Lines rows={[[0, 18, 3], [3, 12, 9], [0, 18, 14]]} h={24} /></Tool>
              <Tool $w={30} $on><Lines rows={[[0, 18, 3], [3, 12, 8], [0, 18, 13]]} h={16} /></Tool>
              <Tool $w={34}><Lines rows={[[0, 18, 10], [3, 12, 16], [0, 18, 21]]} h={24} /></Tool>
              <Tool><OrientIcon /></Tool>
              <DropTool w={12} />
            </Row>
            <Row>
              <Tool><Lines rows={[[0, 18, 1], [0, 13, 6], [0, 18, 12], [0, 13, 17]]} /></Tool>
              <Tool><Lines rows={[[0, 18, 1], [3, 12, 6], [0, 18, 12], [3, 12, 17]]} /></Tool>
              <Tool><Lines rows={[[0, 18, 1], [5, 13, 6], [0, 18, 12], [5, 13, 17]]} /></Tool>
              <Tool><IndentIcon out /></Tool>
              <Tool><IndentIcon /></Tool>
            </Row>
          </Stack>
          <ToolDivider $h={78} $w={12} />
          <Stack $gap={9}>
            <Tool><WrapIcon /></Tool>
            <Row>
              <Tool><MergeIcon /></Tool>
              <DropTool w={16} />
            </Row>
          </Stack>
        </GroupBody>
        <GroupFooter>
          맞춤<Spacer $w={22} />
          <button aria-label="맞춤 설정"><Launcher /></button>
        </GroupFooter>
      </Group>

      <Group $w={200}>
        <GroupBody $pad="8px 0 0 10px">
          <Stack $gap={9}>
            <RibbonSelect $w={180}>
              <select aria-label="표시 형식" defaultValue="일반"><option>일반</option></select>
              <Chev />
            </RibbonSelect>
            <Row>
              <Tool $w={30}><MoneyIcon /></Tool>
              <DropTool w={16} />
              <Tool $w={40}><Glyph $size={22}>%</Glyph></Tool>
              <Tool $w={24}>
                <svg width="11" height="17" viewBox="0 0 11 17" fill="#333"><path d="M5 0a5 5 0 0 1 5.500 5c0 6-4 10-8 12l-.7-1.200C5 13.500 6 11.500 6 9.800A5 5 0 1 1 5 0z" /></svg>
              </Tool>
              <ToolDivider />
              <Tool $w={30}><DecimalIcon more /></Tool>
              <Tool><DecimalIcon /></Tool>
            </Row>
          </Stack>
        </GroupBody>
        <GroupFooter>표시 형식<Spacer $w={22} /></GroupFooter>
      </Group>

      <Group $w={193}>
        <GroupBody $pad="0 0 0 8px">
          <BigTool $w={56}>
            <BigIcon><CondIcon /></BigIcon>
            조건부
            <Inline>서식 <Chev /></Inline>
          </BigTool>
          <BigTool $w={52}>
            <BigIcon><TableStyleIcon /></BigIcon>
            표
            <Inline>서식 <Chev /></Inline>
          </BigTool>
          <BigTool $w={68}>
            <BigIcon><CellStyleIcon /></BigIcon>
            셀
            <Inline>스타일 <Chev /></Inline>
          </BigTool>
        </GroupBody>
        <GroupFooter>스타일</GroupFooter>
      </Group>

      <Group $w={111}>
        <GroupBody $pad="0 0 0 15px">
          <Stack $gap={3}>
            <CellTool><CellOpIcon kind="insert" />삽입<Chev /></CellTool>
            <CellTool><CellOpIcon kind="delete" />삭제<Chev /></CellTool>
            <CellTool><CellOpIcon kind="format" />서식<Chev /></CellTool>
          </Stack>
        </GroupBody>
      </Group>

      <Group $w={184}>
        <GroupBody $pad="0 0 0 10px">
          <Stack $gap={1}>
            <Row><Tool><SigmaIcon /></Tool><DropTool w={12} /></Row>
            <Row><Tool><FillDownIcon /></Tool><DropTool w={12} /></Row>
            <Row><Tool><EraserIcon /></Tool><DropTool w={12} /></Row>
          </Stack>
          <BigTool $w={66}>
            <BigIcon><SortFilterIcon /></BigIcon>
            정렬 및
            <Inline>필터 <Chev /></Inline>
          </BigTool>
          <BigTool $w={50}>
            <BigIcon><Lens s={38} c="#444" w={0.8} /></BigIcon>
            찾기 및
            <Inline>선택 <Chev /></Inline>
          </BigTool>
        </GroupBody>
      </Group>

      <Group $w={73}>
        <GroupBody>
          <BigTool $w={72}>
            <BigIcon><AddinsIcon /></BigIcon>
            추가
            <span>기능</span>
          </BigTool>
        </GroupBody>
      </Group>

      <CollapseCorner>
        <button aria-label="리본 축소"><Chev s={14} w={1.5} /></button>
      </CollapseCorner>
    </RibbonMain>
    <QuickBar>
      <Tool $w={36}><MergeRowsIcon /></Tool>
      <Tool $w={35}><OutlineIcon /></Tool>
      <Tool $w={35}><OutlineIcon w={3.5} /></Tool>
      <Tool $w={36}><PercentEraserIcon /></Tool>
      <Tool $w={34}><OutlineIcon solid /></Tool>
      <Tool $w={30}><SortFilterIcon s={21} /></Tool>
      <DropTool w={14} />
      <Tool $w={40}><MoreIcon /></Tool>
    </QuickBar>
  </Ribbon>
);

const SheetGrid = () => (
  <Grid>
    <colgroup>
      <col className="head" />
      <col className="first" />
      {COLS.slice(1).map((c) => (
        <col key={c} />
      ))}
    </colgroup>
    <thead>
      <tr>
        <CornerHead aria-label="모두 선택">
          <svg width="21" height="21" viewBox="0 0 21 21" fill="#dcdcdc"><path d="M21 0v21H0z" /></svg>
        </CornerHead>
        {COLS.map((c) => (
          <ColHead key={c} $on={c === "E"}>{c}</ColHead>
        ))}
      </tr>
    </thead>
    <tbody>
      {ROWS.map((r) => {
        const listed = r <= 16;
        const kind = (k: "num" | "name") => (listed ? k : undefined);
        const nameFill = r === 1 ? "#e4e4e4" : r === 6 ? "#fff0ce" : r === 15 ? "#ffc7ce" : undefined;
        return (
          <tr key={r}>
            <RowHead $on={r === 6}>{r < 23 ? r : ""}</RowHead>
            <Cell $kind={kind("num")} $head={r === 1} $last={r === 16} $fill={r === 1 ? "#e4e4e4" : undefined}>
              {r === 1 ? "/" : listed && r !== 6 ? r - 1 : ""}
            </Cell>
            <Cell $kind={kind("name")} $head={r === 1} $last={r === 16} $fill={nameFill} $ink={r === 15 ? "#b0000c" : undefined}>
              {r === 1 ? "이름" : listed ? `문서${r - 1}` : ""}
              {r === 6 && (
                <>
                  <CellFrame />
                  <ArrowMark width="80" height="36" viewBox="0 0 80 36" fill="#fd4343">
                    <path d="M5 13h45V3l30 15-30 15V23H5a5 5 0 0 1 0-10z" />
                  </ArrowMark>
                </>
              )}
            </Cell>
            {COLS.slice(2).map((c) => (
              <Cell key={c} />
            ))}
          </tr>
        );
      })}
    </tbody>
  </Grid>
);

const OptionRow = ({ id, label, k, value }: { id: string; label: string; k: string; value: string }) => (
  <Row>
    <FieldLabel htmlFor={id} $w={96}>{label}(<Key>{k}</Key>):</FieldLabel>
    <DialogCombo id={id} w={106} h={33} value={value} />
  </Row>
);

const FindDialog = () => (
  <Dialog $x={200} $y={398} $w={632} $h={358} aria-label="찾기 및 바꾸기">
    <DialogTitle $muted>
      <h2>찾기 및 바꾸기</h2>
      <TitleButton aria-label="최소화"><svg width="12" height="2"><path d="M0 1h12" stroke="#dadada" /></svg></TitleButton>
      <TitleButton aria-label="최대화"><svg width="13" height="13" fill="none"><path d="M1 1h11v11H1z" stroke="#8c8c8c" strokeWidth="1.200" /></svg></TitleButton>
      <TitleButton aria-label="닫기"><Cross c="#8c8c8c" /></TitleButton>
    </DialogTitle>
    <DialogTabs $top={11}>
      <DialogTab $w={76} $active>찾기(<Key>D</Key>)</DialogTab>
      <DialogTab $w={85}>바꾸기(<Key>P</Key>)</DialogTab>
    </DialogTabs>
    <Panel $pad="12px 5px 0 12px">
      <Row>
        <FieldLabel htmlFor="find-what" $w={100}>찾을 내용(<Key>N</Key>):</FieldLabel>
        <Combo $w={205} $h={30}>
          <input id="find-what" />
          <ComboArrow><Chev s={12} c="#555" w={1.2} /></ComboArrow>
        </Combo>
        <PreviewBox>미리 보기*</PreviewBox>
        <SplitButton>
          <span>서식(<Key>M</Key>)...</span>
          <span><Triangle d="M1 1h6L4 4z" w={8} h={5} c="#000" /></span>
        </SplitButton>
      </Row>
      <OptionsArea>
        <Stack $gap={5}>
          <OptionRow id="scope" label="범위" k="H" value="시트" />
          <OptionRow id="order" label="검색" k="S" value="행" />
          <OptionRow id="lookin" label="찾는 위치" k="L" value="수식" />
        </Stack>
        <ChecksColumn>
          <CheckLine><input type="checkbox" /><span>대/소문자 구분(<Key>C</Key>)</span></CheckLine>
          <CheckLine><input type="checkbox" /><span>전체 셀 내용 일치(<Key>O</Key>)</span></CheckLine>
          <CheckLine><input type="checkbox" /><span>전자/반자 구분(<Key>B</Key>)</span></CheckLine>
        </ChecksColumn>
        <DialogButton $w={99}>옵션(<Key>T</Key>) &lt;&lt;</DialogButton>
      </OptionsArea>
    </Panel>
    <ButtonRow $top={15} $gap={12}>
      <DialogButton $w={103}>모두 찾기(<Key>I</Key>)</DialogButton>
      <DialogButton $w={105}>다음 찾기(<Key>F</Key>)</DialogButton>
      <Spacer $w={0} />
      <DialogButton $w={99}>닫기</DialogButton>
    </ButtonRow>
    <Badge $x={446} $y={88}>2</Badge>
    <Badge $x={462} $y={244}>1</Badge>
  </Dialog>
);

const FormatDialog = () => (
  <Dialog $x={848} $y={182} $w={691} $h={785} aria-label="서식 찾기">
    <DialogTitle>
      <h2>서식 찾기</h2>
      <TitleButton aria-label="도움말">?</TitleButton>
      <TitleButton aria-label="닫기"><Cross /></TitleButton>
    </DialogTitle>
    <DialogTabs $top={11}>
      <DialogTab $w={89}>표시 형식</DialogTab>
      <DialogTab $w={72}>맞춤</DialogTab>
      <DialogTab $w={72}>글꼴</DialogTab>
      <DialogTab $w={66}>테두리</DialogTab>
      <DialogTab $w={82} $active $mark>채우기</DialogTab>
      <DialogTab $w={67}>보호</DialogTab>
    </DialogTabs>
    <Panel $pad="14px 10px 14px 21px">
      <FillColumns>
        <Column $w={228}>
          <FieldLabel as="span">배경색(<Key>C</Key>):</FieldLabel>
          <NoColor>색 없음</NoColor>
          <Swatches $line>
            {THEME.map((c, i) => <Swatch key={i} $c={c} aria-label={c} />)}
          </Swatches>
          <Swatches $line>
            {SHADES.map((row, y) => row.map((c, x) => <Swatch key={`${y}-${x}`} $c={c} $picked={y === 0 && x === 7} aria-label={c} />))}
          </Swatches>
          <Swatches>
            {STANDARD.map((c, i) => <Swatch key={i} $c={c} aria-label={c} />)}
          </Swatches>
          <ButtonRow $top={16} $align="flex-start">
            <DialogButton $w={126}>채우기 효과(<Key>I</Key>)...</DialogButton>
            <DialogButton $w={106}>다른 색(<Key>M</Key>)...</DialogButton>
          </ButtonRow>
        </Column>
        <Column $w={232}>
          <FieldLabel htmlFor="pattern-color">무늬 색(<Key>A</Key>):</FieldLabel>
          <PatternGap><DialogCombo id="pattern-color" w={232} h={35} value="자동" center /></PatternGap>
          <FieldLabel htmlFor="pattern-style">무늬 스타일(<Key>P</Key>):</FieldLabel>
          <PatternGap><DialogCombo id="pattern-style" w={232} h={35} value="" flat /></PatternGap>
        </Column>
      </FillColumns>
      <PreviewArea>
        <PreviewSet>
          <legend>보기</legend>
          <PreviewFill />
        </PreviewSet>
        <ButtonRow $top={21}>
          <DialogButton $w={99}>지우기(<Key>R</Key>)</DialogButton>
        </ButtonRow>
      </PreviewArea>
    </Panel>
    <ButtonRow $top={14}>
      <DialogButton $w={167}>셀에서 서식 선택(<Key>A</Key>)...</DialogButton>
      <Grow />
      <DialogButton $w={99} $primary>확인</DialogButton>
      <DialogButton $w={99}>취소</DialogButton>
    </ButtonRow>
    <Badge $x={265} $y={43}>3</Badge>
    <Badge $x={259} $y={178}>4</Badge>
  </Dialog>
);

export default function App() {
  return (
    <>
      <Global />
      <Window>
        <TitleBar>
          <TitleLeft>
            <ExcelLogo />
            <span>통합 문서3  -  Excel</span>
          </TitleLeft>
          <SearchBox>
            <Lens />
            <input placeholder="검색" aria-label="검색" />
          </SearchBox>
          <TitleRight>
            <LoginButton>로그인</LoginButton>
            <WindowButton aria-label="최소화"><svg width="14" height="2"><path d="M0 1h14" stroke="#b0b0b0" strokeWidth="1.300" /></svg></WindowButton>
            <WindowButton aria-label="최대화"><svg width="14" height="14" fill="none"><rect x="1" y="1" width="12" height="12" rx="1.500" stroke="#b0b0b0" strokeWidth="1.300" /></svg></WindowButton>
            <WindowButton aria-label="닫기"><Cross c="#b0b0b0" /></WindowButton>
          </TitleRight>
        </TitleBar>
        <TabsRow>
          <TabList>
            {["파일", "홈", "삽입", "페이지 레이아웃", "수식", "데이터", "검토", "보기", "도움말"].map((t) => (
              <RibbonTab key={t} $active={t === "홈"}>{t}</RibbonTab>
            ))}
          </TabList>
          <ShareButton><ShareIcon />공유<Chev c="#fff" /></ShareButton>
        </TabsRow>
        <RibbonBar />
        <FormulaRow>
          <Field $w={127}>
            <input aria-label="이름 상자" defaultValue="E6" />
            <Chev s={14} w={1.5} />
          </Field>
          <DotsCell><DotsIcon /></DotsCell>
          <Field $w={92}>
            <Cross s={16} c="#b4b4b4" />
            <svg width="20" height="14" viewBox="0 0 20 14" fill="none" stroke="#b4b4b4" strokeWidth="1.500"><path d="m.7 7 6.500 6L19.500.7" /></svg>
            <FxGlyph>fx</FxGlyph>
          </Field>
          <Spacer $w={5} />
          <Field>
            <input aria-label="수식 입력줄" />
            <Chev s={14} c="#999" w={1.5} />
          </Field>
        </FormulaRow>
        <SheetArea>
          <GridClip><SheetGrid /></GridClip>
          <VScroll>
            <Triangle d="M1 8 5.500 1 10 8z" w={11} h={9} />
            <VThumb />
            <Triangle d="M1 1h9L5.500 8z" w={11} h={9} />
          </VScroll>
        </SheetArea>
        <SheetTabs>
          <Spacer $w={31} />
          <Angle />
          <Spacer $w={33} />
          <Angle right />
          <Spacer $w={60} />
          <SheetTab><span>Sheet1</span></SheetTab>
          <ToolDivider $h={24} />
          <Spacer $w={47} />
          <svg width="15" height="15" stroke="#333" strokeWidth="1.500"><path d="M7.500 0v15M0 7.500h15" /></svg>
          <Grow />
          <DotsIcon />
          <Spacer $w={8} />
          <HScroll>
            <Triangle d="M8 1v9L1 5.500z" w={9} h={11} />
            <HThumb />
            <Triangle d="M1 1v9l7-4.500z" w={9} h={11} />
          </HScroll>
        </SheetTabs>
        <StatusBar>
          준비
          <Spacer $w={24} />
          <AccessIcon />
          <Spacer $w={3} />
          접근성: 계속 진행 가능
          <Grow />
          <ViewButton $on aria-label="기본"><NormalViewIcon /></ViewButton>
          <ViewButton aria-label="페이지 레이아웃"><PageViewIcon /></ViewButton>
          <ViewButton aria-label="페이지 나누기"><BreakViewIcon /></ViewButton>
          <Spacer $w={7} />
          <svg width="9" height="2"><path d="M0 1h9" stroke="#333" strokeWidth="1.300" /></svg>
          <ZoomSlider type="range" aria-label="확대/축소" defaultValue={50} />
          <svg width="9" height="9" stroke="#333" strokeWidth="1.200"><path d="M4.500 0v9M0 4.500h9" /></svg>
          <Spacer $w={17} />
          <ZoomText>100%</ZoomText>
        </StatusBar>
        <FindDialog />
        <FormatDialog />
        <Watermark>
          <CubeMark />
          SOFTWAREIRE
        </Watermark>
      </Window>
    </>
  );
}
